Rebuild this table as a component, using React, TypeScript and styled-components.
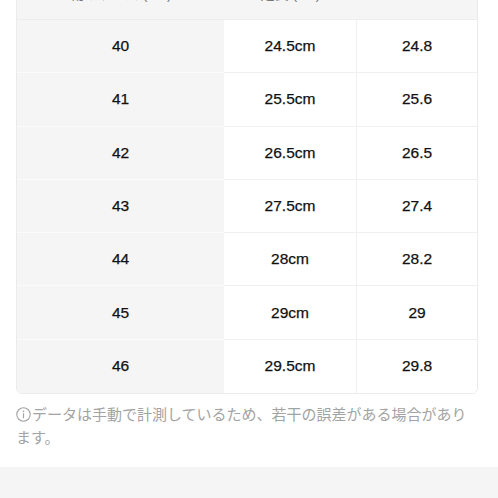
import styled, { createGlobalStyle } from 'styled-components';

const sizeRows = [
  { eu: '40', foot: '24.5cm', jp: '24.8' },
  { eu: '41', foot: '25.5cm', jp: '25.6' },
  { eu: '42', foot: '26.5cm', jp: '26.5' },
  { eu: '43', foot: '27.5cm', jp: '27.4' },
  { eu: '44', foot: '28cm', jp: '28.2' },
  { eu: '45', foot: '29cm', jp: '29' },
  { eu: '46', foot: '29.5cm', jp: '29.8' },
];

const GlobalStyle = createGlobalStyle`
  html, body {
    margin: 0;
    padding: 0;
    background: #fff;
    overflow: hidden;
  }
  body {
    font-family: 'Liberation Sans', 'Noto Sans CJK JP', sans-serif;
  }
`;

const Page = styled.div`
  width: 498px;
  height: 498px;
  display: flex;
  flex-direction: column;
  overflow: hidden;
`;

const Content = styled.div`
  padding: 0 20px 0 16px;
`;

// header row sits mostly above the visible area, as in the scrolled screenshot
const Table = styled.div`
  margin-top: -33px;
  display: grid;
  grid-template-columns: 207px 133px 1fr;
  border: 1px solid #ebebeb;
  border-radius: 6px;
  overflow: hidden;
`;

const HeadCell = styled.div`
  height: 52px;
  display: flex;
  align-items: center;
  justify-content: center;
  background: #f5f5f5;
  border-bottom: 1px solid #ececec;
  box-sizing: border-box;
  color: #777;
  font-family: 'Liberation Sans', 'Noto Sans CJK JP', sans-serif;
  font-size: 14px;
  line-height: 16px;
`;

const Cell = styled.div<{ $first?: boolean; $last?: boolean; $lastRow?: boolean }>`
  height: 53.3px;
  box-sizing: border-box;
  display: flex;
  align-items: center;
  justify-content: center;
  font-family: 'Liberation Sans', Arial, sans-serif;
  font-size: 15.5px;
  color: #111;
  -webkit-text-stroke: 0.25px #111;
  background: ${(p) => (p.$first ? '#f5f5f5' : '#fff')};
  border-bottom: ${(p) =>
    p.$lastRow ? 'none' : `1px solid ${p.$first ? '#fbfbfb' : '#f0f0f0'}`};
  border-right: ${(p) => (p.$first || p.$last ? 'none' : '1px solid #f0f0f0')};
`;

const Note = styled.p`
  margin: 8px 0 0;
  font-family: 'Noto Sans CJK JP', sans-serif;
  font-size: 15px;
  line-height: 23px;
  color: #a3a3a3;
`;

const InfoIcon = styled.svg`
  width: 15px;
  height: 15px;
  margin-right: 1px;
  vertical-align: -2px;
`;

const Band = styled.div`
  margin-top: auto;
  height: 31px;
  background: #f5f5f5;
`;

export default function App() {
  return (
    <Page>
      <GlobalStyle />
      <Content>
        <Table>
          <HeadCell>靴のサイズ (EU)</HeadCell>
          <HeadCell>足長 (cm)</HeadCell>
          <HeadCell>JP</HeadCell>
          {sizeRows.map((row, i) => {
            const lastRow = i === sizeRows.length - 1;
            return [
              <Cell key={`${row.eu}-a`} $first $lastRow={lastRow}>
                {row.eu}
              </Cell>,
              <Cell key={`${row.eu}-b`} $lastRow={lastRow}>
                {row.foot}
              </Cell>,
              <Cell key={`${row.eu}-c`} $last $lastRow={lastRow}>
                {row.jp}
              </Cell>,
            ];
          })}
        </Table>
        <Note>
          <InfoIcon viewBox="0 0 15 15" fill="none" stroke="#a3a3a3">
            <circle cx="7.5" cy="7.5" r="6.7" strokeWidth="1.1" />
            <circle cx="7.5" cy="4.3" r="0.85" fill="#a3a3a3" stroke="none" />
            <path d="M7.5 6.3v5" strokeWidth="1.2" />
          </InfoIcon>
          データは手動で計測しているため、若干の誤差がある場合があります。
        </Note>
      </Content>
      <Band />
    </Page>
  );
}
